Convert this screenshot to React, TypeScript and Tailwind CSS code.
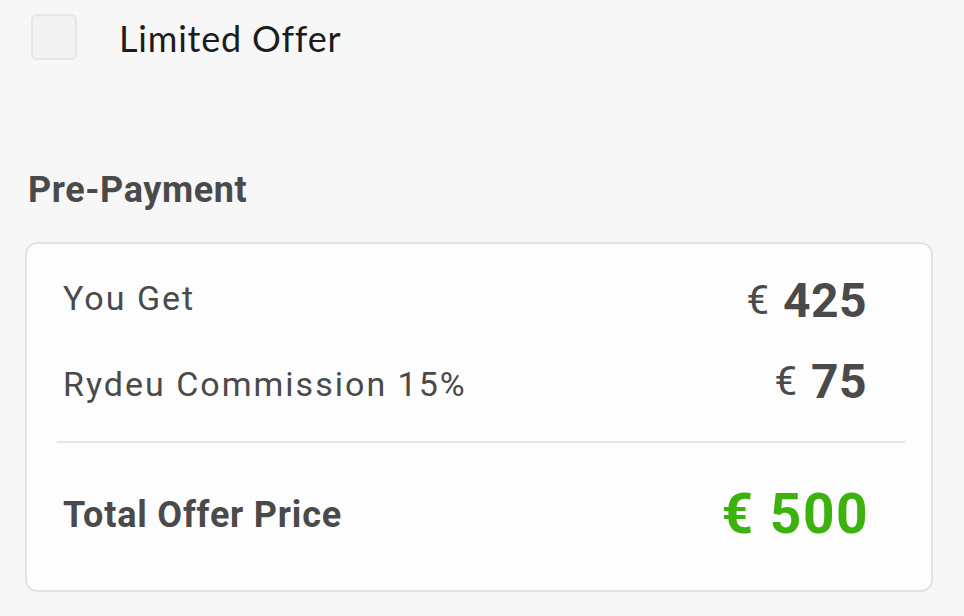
import React from "react";

const PrePayment: React.FC = () => {
  const rows = [
    { id: 1, label: "You Get", amount: "425", h: "h-[86px]", shift: "mt-[3px]" },
    { id: 2, label: "Rydeu Commission 15%", amount: "75", h: "h-[85px]", shift: "-mt-[2px]" },
  ];
  return (
    <div className="w-[964px] h-[616px] bg-[#f7f7f7] overflow-hidden">
      <div className="flex items-start h-[46px] mt-[14px] pl-[31px]">
        <div className="w-[46px] h-[46px] rounded-[6px] border-2 border-[#e6e6e6] bg-[#f3f3f3]"></div>
        <div className="ml-[42px] mt-[3px] font-['Lato'] text-[36px] leading-[42px] text-[#1c1c1c] tracking-[0.8px]">
          Limited Offer
        </div>
      </div>

      <div className="pl-[28px] pt-[112px] font-['Roboto'] font-bold text-[36px] text-[#4a4a4a] tracking-[0.6px] leading-[36px]">
        Pre-Payment
      </div>

      <div className="ml-[25px] mt-[34px] w-[908px] h-[350px] rounded-[12px] border-2 border-[#e3e3e3] bg-[#fdfdfd] font-['Roboto'] text-[#4a4a4a] flex flex-col">
        <div className="pl-[36px] pr-[64px] pt-[26px]">
          {rows.map((row) => (
            <div key={row.id} className={`flex items-start justify-between ${row.h}`}>
              <span className="mt-[8px] text-[34px] leading-[40px] tracking-[2px]">{row.label}</span>
              <span className={`flex items-center gap-[14px] ${row.shift}`}>
                <span className="text-[40px] leading-[56px]">€</span>
                <span className="text-[48px] leading-[56px] font-bold tracking-[0.5px]">{row.amount}</span>
              </span>
            </div>
          ))}
        </div>
        <div className="ml-[30px] mr-[26px] h-[2px] bg-[#e3e6e9]"></div>
        <div className="flex items-start justify-between pl-[36px] pr-[62px]">
          <span className="mt-[52px] text-[36px] leading-[40px] font-bold tracking-[0.8px]">Total Offer Price</span>
          <span className="mt-[41px] text-[55px] leading-[60px] font-bold text-[#3bb30c] tracking-[1.5px]">€ 500</span>
        </div>
      </div>
    </div>
  );
};

export default function App() {
  return <PrePayment />;
}
